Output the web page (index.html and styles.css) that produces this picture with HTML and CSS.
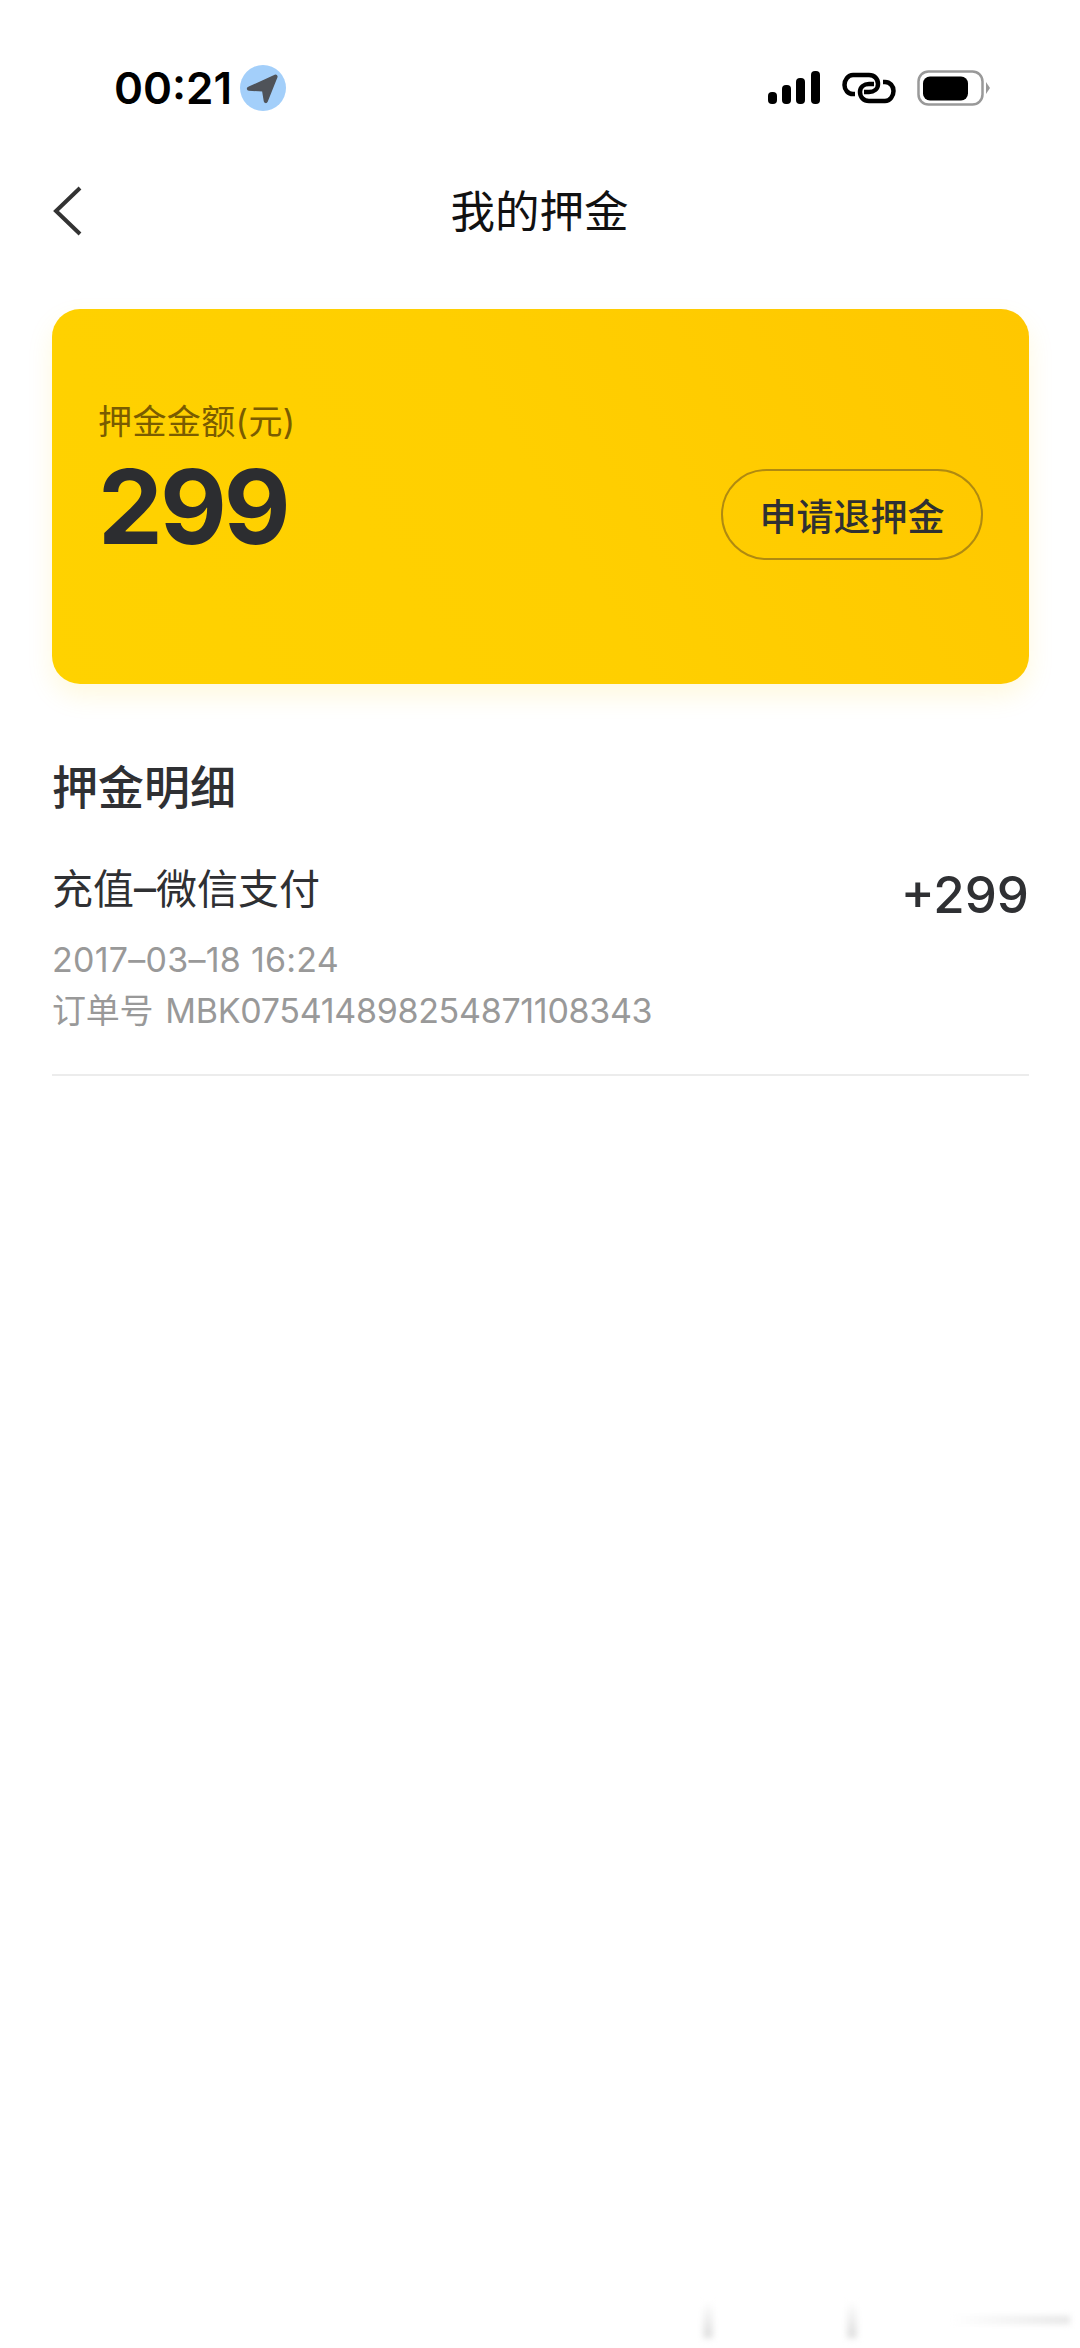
FILE: index.html
```html
<!DOCTYPE html>
<html lang="zh-CN">
<head>
<meta charset="utf-8">
<title>我的押金</title>
<link rel="stylesheet" href="styles.css">
</head>
<body>
<div class="screen">
  <header class="status">
    <div class="status-left">
      <span class="clock">00:21</span>
      <svg class="loc" width="46" height="46" viewBox="0 0 46 46"><circle cx="23" cy="23" r="23" fill="#a3cffa"/><path d="M8.500 22.500 35 10.500c1.200-.5 2.200.5 1.700 1.700L27 36.500c-.6 1.300-2.300 1.100-2.500-.3l-1.700-10.400-13.900-.8c-1.500-.1-1.800-2-.4-2.500Z" fill="#4f5359" stroke="#4f5359" stroke-width="1.500" stroke-linejoin="round"/></svg>
    </div>
    <div class="status-right">
      <svg width="52" height="34" viewBox="0 0 52 34" fill="#000"><rect x="0" y="21" width="9" height="12" rx="4"/><rect x="14" y="14" width="9" height="19" rx="4"/><rect x="28" y="7" width="9" height="26" rx="4"/><rect x="43" y="0" width="9" height="33" rx="4"/></svg>
      <svg width="54" height="32" viewBox="0 0 54 32" fill="none" stroke="#000" stroke-width="4.500"><path d="M13 22H11C6 22 2.500 18 2.500 13S6 3 11 3H27c5.500 0 9 4 9 9s-4 8-9 8H22"/><path d="M41 10h2c5 0 8.500 4 8.500 9s-3.500 10-8.500 10H27c-5.500 0-9-4-9-9s4-8 9-8h5"/></svg>
      <svg class="battery" width="74" height="36" viewBox="0 0 74 36"><rect x="1.500" y="1.500" width="64" height="33" rx="10" fill="none" stroke="#999" stroke-width="2.500"/><rect x="6" y="6.500" width="45" height="24" rx="7" fill="#000"/><path d="M69 12l4 6-4 6Z" fill="#999"/></svg>
    </div>
  </header>

  <nav class="nav">
    <svg class="back" width="30" height="50" viewBox="0 0 30 50" fill="none" stroke="#333" stroke-width="4"><path d="M27 2 3 25l24 23"/></svg>
    <h1 class="nav-title">我的押金</h1>
  </nav>

  <section class="card">
    <div class="amount">
      <div class="amount-label">押金金额(元)</div>
      <div class="amount-value">299</div>
    </div>
    <div class="refund">申请退押金</div>
  </section>

  <h2 class="section-title">押金明细</h2>

  <article class="row">
    <div class="row-top">
      <div class="row-name">充值<span class="dash">–</span>微信支付</div>
      <div class="row-amount">+299</div>
    </div>
    <div class="row-meta row-date">2017–03–18 16:24</div>
    <div class="row-meta row-order">订单号 MBK075414898254871108343</div>
  </article>

  <div class="ghost ghost-a"></div>
  <div class="ghost ghost-b"></div>
  <div class="ghost ghost-c"></div>
</div>
</body>
</html>
```
FILE: styles.css
```css
* { box-sizing: border-box; }
html, body { margin: 0; padding: 0; background: #fff; }
body { font-family: Inter, "Noto Sans CJK SC", sans-serif; color: #2f3033; }
.screen { position: relative; width: 1080px; height: 2348px; overflow: hidden; padding: 0 51px 0 52px; background: #fff; }

.status { height: 176px; display: flex; justify-content: space-between; align-items: flex-start; padding: 65px 38px 0 62px; }
.status-left { display: flex; align-items: center; gap: 8px; height: 46px; }
.clock { font-size: 44px; font-weight: 600; line-height: 46px; color: #000; }
.loc { display: block; }
.status-right { display: flex; align-items: center; gap: 22px; height: 46px; }
.status-right svg { display: block; }
.status-right .battery { margin-left: -1px; }

.nav { position: relative; height: 70px; display: flex; align-items: center; justify-content: center; padding-right: 2px; }
.back { position: absolute; left: 1px; top: 10px; }
.nav-title { margin: 0; font-size: 44.500px; font-weight: 400; line-height: 72px; padding-top: 2px; color: #111; }

.card { margin-top: 63px; height: 375px; border-radius: 28px; background: linear-gradient(60deg, #ffd200 0%, #ffcf00 50%, #ffc700 100%); box-shadow: 0 12px 26px rgba(255, 205, 0, .13); display: flex; justify-content: space-between; padding: 91px 46px 0 46px; }
.amount-label { font-size: 34px; line-height: 44px; color: #7a5c00; letter-spacing: .4px; }
.amount-value { font-size: 103px; font-weight: 700; line-height: 106px; color: #2c2d30; margin-top: 10px; letter-spacing: -3px; }
.refund { width: 262px; height: 91px; margin-top: 69px; border: 2.500px solid #b08a10; border-radius: 46px; display: flex; align-items: center; justify-content: center; font-size: 37px; font-weight: 500; color: #2f3033; }

.section-title { margin: 73px 0 0; font-size: 46px; font-weight: 500; line-height: 60px; color: #2f3033; }

.row { margin-top: 48px; padding-bottom: 38px; border-bottom: 2px solid #ececec; }
.row-top { display: flex; justify-content: space-between; align-items: flex-start; height: 69px; }
.row-name { font-size: 41px; line-height: 46px; color: #2f3033; }
.dash { font-size: 44px; }
.row-amount { font-size: 51px; font-weight: 500; line-height: 60px; color: #2f3033; }
.row-meta { font-size: 34px; line-height: 51px; color: #999; }
.row-date { letter-spacing: .25px; }
.row-order { letter-spacing: -.3px; word-spacing: 3px; }

.ghost { position: absolute; filter: blur(3px); }
.ghost-a { left: 703px; top: 2302px; width: 10px; height: 36px; background: linear-gradient(180deg, #fff, #dcdcdc); }
.ghost-b { left: 847px; top: 2302px; width: 10px; height: 36px; background: linear-gradient(180deg, #fff, #dcdcdc); }
.ghost-c { left: 950px; top: 2316px; width: 120px; height: 8px; background: linear-gradient(90deg, #fff, #e4e4e4); }
```
